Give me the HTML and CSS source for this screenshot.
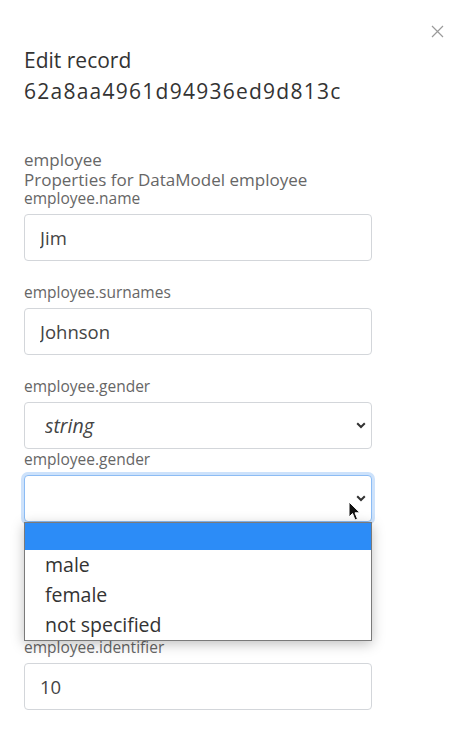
FILE: index.html
```html
<!DOCTYPE html>
<html lang="en">
<head>
  <meta charset="UTF-8" />
  <meta name="viewport" content="width=device-width, initial-scale=1.0" />
  <title>Edit record</title>
  <link rel="stylesheet" href="styles.css">
</head>
<body>
  <div class="panel">
    <button class="close" aria-label="Close">
      <svg width="13" height="13" viewBox="0 0 13 13">
        <path d="M1 1 L12 12 M12 1 L1 12" stroke="#9a9a9a" stroke-width="1.2" fill="none" />
      </svg>
    </button>

    <h1 class="title">Edit record<br><span class="record-id">62a8aa4961d94936ed9d813c</span></h1>

    <form class="record-form">
      <div class="group-head">
        <div class="group-name">employee</div>
        <div class="group-desc">Properties for DataModel employee</div>
      </div>

      <label class="field-label" for="name">employee.name</label>
      <input class="field" type="text" id="name" value="Jim" />

      <label class="field-label spaced" for="surnames">employee.surnames</label>
      <input class="field" type="text" id="surnames" value="Johnson" />

      <label class="field-label spaced" for="genderType">employee.gender</label>
      <div class="select-wrap">
        <select class="field select italic" id="genderType">
          <option>string</option>
        </select>
        <svg class="chevron" width="10" height="7" viewBox="0 0 10 7">
          <path d="M1.2 1.2 L5 5 L8.8 1.2" stroke="#333" stroke-width="2" fill="none" />
        </svg>
      </div>

      <label class="field-label" for="gender">employee.gender</label>
      <div class="select-wrap">
        <select class="field select focused" id="gender">
          <option></option>
          <option>male</option>
          <option>female</option>
          <option>not specified</option>
        </select>
        <svg class="chevron" width="10" height="7" viewBox="0 0 10 7">
          <path d="M1.2 1.2 L5 5 L8.8 1.2" stroke="#333" stroke-width="2" fill="none" />
        </svg>
        <span class="cursor">
          <svg width="14" height="22" viewBox="0 0 14 22">
            <path d="M1 1 L1 16 L4.5 12.5 L7 19 L9.5 18 L7 11.8 L12 11.8 Z" fill="#111" stroke="#fff" stroke-width="1" />
          </svg>
        </span>
        <ul class="options">
          <li class="active">&nbsp;</li>
          <li>male</li>
          <li>female</li>
          <li>not specified</li>
        </ul>
      </div>

      <label class="field-label after-gender" for="identifier">employee.identifier</label>
      <input class="field" type="text" id="identifier" value="10" />
    </form>
  </div>
</body>
</html>
```

FILE: styles.css
```css
body {
  margin: 0;
  background: #fff;
  font-family: 'Open Sans', sans-serif;
  color: #333;
}
.panel {
  position: relative;
  padding: 40px 24px 24px 24px;
}
.close {
  position: absolute;
  top: 25px;
  right: 16px;
  border: none;
  background: none;
  padding: 0;
  width: 13px;
  height: 13px;
  cursor: pointer;
}
.title {
  font-weight: 400;
  font-size: 21px;
  line-height: 31px;
  margin: 5px 0 43px 0;
  color: #333;
}
.record-id {
  letter-spacing: 1.25px;
}
.group-head {
  color: #666;
  font-size: 17px;
  line-height: 20px;
}
.field-label {
  display: block;
  font-size: 15.5px;
  line-height: 20px;
  color: #666;
  margin-bottom: 6px;
}
.group-head + .field-label {
  margin-top: -2px;
}
.field-label.spaced {
  margin-top: 21px;
}
.field-label.after-gender {
  margin-top: 115px;
}
.field {
  display: block;
  box-sizing: border-box;
  width: 348px;
  height: 47px;
  padding: 0 15px;
  font-family: 'Open Sans', sans-serif;
  font-size: 18.5px;
  color: #444;
  background: #fff;
  border: 1px solid #d3d6da;
  border-radius: 4px;
  outline: none;
}
.select-wrap {
  position: relative;
  width: 348px;
}
.select {
  appearance: none;
  -webkit-appearance: none;
  padding-left: 20px;
}
.italic {
  font-style: italic;
  font-size: 19.5px;
}
.chevron {
  position: absolute;
  right: 6px;
  top: 20px;
}
.focused {
  border-color: #8cbcf4;
  box-shadow: 0 0 0 3px #cde2fb;
}
.cursor {
  position: absolute;
  left: 324px;
  top: 26px;
}
.options {
  position: absolute;
  left: 0;
  top: 47px;
  width: 348px;
  box-sizing: border-box;
  margin: 0;
  padding: 0;
  list-style: none;
  background: #fff;
  border: 1px solid #7a7a7a;
  box-shadow: 0 3px 12px rgba(0, 0, 0, 0.25);
  z-index: 2;
}
.options li {
  font-size: 19.5px;
  line-height: 30px;
  padding-left: 20px;
  color: #333;
}
.options li.active {
  background: #2c8cf7;
  height: 27px;
  line-height: 27px;
}
```
